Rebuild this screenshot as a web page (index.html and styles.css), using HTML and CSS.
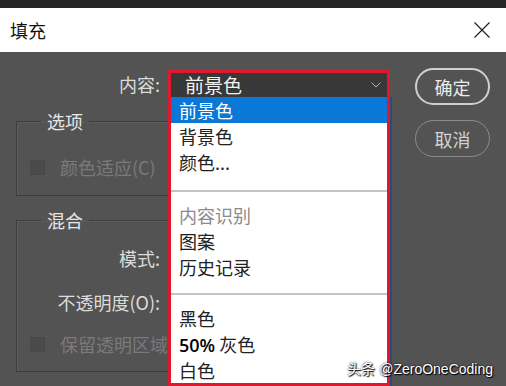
FILE: index.html
```
<!DOCTYPE html>
<html lang="zh-CN">
<head>
    <meta charset="UTF-8">
    <meta name="viewport" content="width=device-width, initial-scale=1.0">
    <title>填充</title>
    <link rel="stylesheet" href="styles.css">
</head>
<body>
    <div class="topbar"></div>
    <div class="titlebar">
        <span class="title">填充</span>
        <svg class="close" width="16" height="16" viewBox="0 0 16 16">
            <path d="M0.5 0.5 L15.5 15.5 M15.5 0.5 L0.5 15.5" stroke="#1a1a1a" stroke-width="1.1" fill="none"/>
        </svg>
    </div>
    <div class="main">
        <div class="form">
            <div class="content-row">
                <span class="label">内容:</span>
                <div class="select">
                    <span class="select-value">前景色</span>
                    <svg class="chevron" width="10" height="6" viewBox="0 0 10 6">
                        <path d="M0.5 0.5 L5 5 L9.5 0.5" stroke="#b4b4b4" stroke-width="1" fill="none"/>
                    </svg>
                    <div class="menu">
                        <div class="menu-group">
                            <div class="item selected">前景色</div>
                            <div class="item">背景色</div>
                            <div class="item">颜色...</div>
                        </div>
                        <div class="menu-group">
                            <div class="item muted">内容识别</div>
                            <div class="item">图案</div>
                            <div class="item">历史记录</div>
                        </div>
                        <div class="menu-group">
                            <div class="item">黑色</div>
                            <div class="item"><b>50%</b> 灰色</div>
                            <div class="item">白色</div>
                        </div>
                    </div>
                </div>
            </div>

            <fieldset class="group group-options">
                <legend>选项</legend>
                <div class="check-row">
                    <span class="checkbox"></span>
                    <span class="disabled">颜色适应(C)</span>
                </div>
            </fieldset>

            <fieldset class="group group-blend">
                <legend>混合</legend>
                <div class="field-row">
                    <span class="field-label">模式:</span>
                </div>
                <div class="field-row">
                    <span class="field-label">不透明度(O):</span>
                </div>
                <div class="check-row">
                    <span class="checkbox"></span>
                    <span class="disabled">保留透明区域</span>
                </div>
            </fieldset>
        </div>

        <div class="actions">
            <button class="btn btn-primary">确定</button>
            <button class="btn">取消</button>
        </div>
    </div>
    <div class="watermark">头条 @ZeroOneCoding</div>
</body>
</html>
```

FILE: styles.css
```
body {
    margin: 0;
    width: 506px;
    height: 386px;
    overflow: hidden;
    background-color: #535353;
    font-family: "Noto Sans CJK SC", "Microsoft YaHei", sans-serif;
    font-size: 18px;
    color: #dcdcdc;
    position: relative;
}
.topbar {
    height: 8px;
    background-color: #262626;
}
.titlebar {
    height: 44px;
    background-color: #fff;
    display: flex;
    align-items: center;
    justify-content: space-between;
    padding: 0 16px 0 10px;
}
.title {
    color: #111;
    font-size: 18px;
    line-height: 24px;
}
.close {
    display: block;
}
.main {
    display: flex;
    gap: 25px;
    padding: 16px 16px 0;
}
.form {
    width: 374px;
}
.content-row {
    display: flex;
    align-items: center;
    margin-top: 2px;
    height: 27px;
}
.label {
    width: 144px;
    margin-right: 8px;
    text-align: right;
    line-height: 26px;
}
.select {
    position: relative;
    box-sizing: border-box;
    width: 222px;
    height: 27px;
    border: 3px solid #e0182d;
    border-bottom: none;
    background-color: #383838;
    display: flex;
    align-items: center;
    justify-content: space-between;
    padding: 0 6px 0 14px;
}
.select-value {
    font-size: 19px;
    line-height: 24px;
    color: #f2f2f2;
}
.chevron {
    display: block;
}
.menu {
    position: absolute;
    top: 24px;
    left: -3px;
    width: 222px;
    box-sizing: border-box;
    border: 3px solid #e0182d;
    border-top: none;
    background-color: #fff;
    box-shadow: 2px 0 0 #2a4b7c;
    z-index: 2;
}
.menu-group {
    padding: 10px 0 13px;
    border-bottom: 2px solid #c4c4c4;
}
.menu-group:first-child {
    padding-top: 0;
    padding-bottom: 15px;
}
.menu-group:last-child {
    border-bottom: none;
    padding-bottom: 0;
}
.item {
    height: 26px;
    line-height: 26px;
    padding-left: 8px;
    color: #222;
    white-space: nowrap;
}
.item b {
    color: #000;
    font-family: "Open Sans", "Noto Sans", sans-serif;
    font-weight: 600;
}
.item.selected {
    background-color: #0a78d7;
    color: #fff;
}
.item.muted {
    color: #8a8a8a;
}
.group {
    margin: 0;
    border: 1px solid #3e3e3e;
    box-shadow: inset 1px 1px 0 #5c5c5c;
    padding: 0 0 0 13px;
}
.group legend {
    margin-left: 11px;
    padding: 0 6px;
    line-height: 24px;
    color: #e6e6e6;
}
.group-options {
    margin-top: 12px;
    padding-top: 21px;
    padding-bottom: 15px;
}
.group-blend {
    margin-top: 12px;
    padding-top: 13px;
    padding-bottom: 14px;
}
.check-row {
    display: flex;
    align-items: center;
    height: 26px;
}
.checkbox {
    width: 13px;
    height: 13px;
    border: 1px solid #484848;
    background-color: #4b4b4b;
    margin-right: 15px;
}
.disabled {
    color: #7a7a7a;
    line-height: 26px;
}
.field-row {
    height: 26px;
    line-height: 26px;
    margin-bottom: 18px;
}
.field-row + .field-row {
    margin-bottom: 16px;
}
.field-label {
    display: inline-block;
    width: 130px;
    text-align: right;
}
.actions {
    display: flex;
    flex-direction: column;
    gap: 15px;
}
.btn {
    width: 75px;
    height: 37px;
    border-radius: 19px;
    border: 1.5px solid #8c8c8c;
    background-color: transparent;
    color: #d2d2d2;
    font-family: inherit;
    font-size: 18px;
    padding: 0;
    cursor: pointer;
}
.btn-primary {
    border: 2px solid #cfcfcf;
    color: #ececec;
}
.watermark {
    position: absolute;
    right: 13px;
    bottom: 8px;
    font-family: "Liberation Sans", Arial, sans-serif;
    font-size: 14px;
    color: #fff;
    text-shadow: 0 0 2px #000, 1px 1px 1px #000;
    z-index: 3;
}
```
